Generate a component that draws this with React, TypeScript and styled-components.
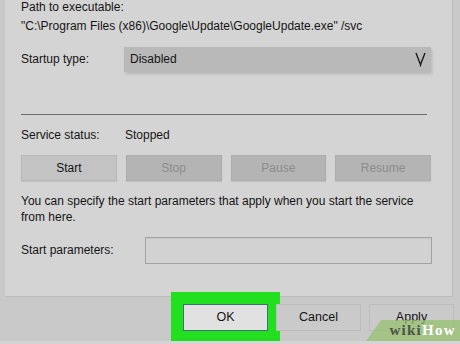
import React from 'react';
import styled, { createGlobalStyle } from 'styled-components';

const GlobalStyle = createGlobalStyle`
  html, body {
    margin: 0;
    padding: 0;
    background: #c9c9c9;
  }
  body {
    font-family: "Liberation Sans", Arial, sans-serif;
    font-size: 12px;
    color: #141414;
  }
`;

const SERVICE_BUTTONS = [
  { label: 'Start', enabled: true },
  { label: 'Stop', enabled: false },
  { label: 'Pause', enabled: false },
  { label: 'Resume', enabled: false },
];

export default function App() {
  const serviceButtonsMarkup = SERVICE_BUTTONS.map((btn) => (
    <ServiceButton key={btn.label} $enabled={btn.enabled}>
      {btn.label}
    </ServiceButton>
  ));

  return (
    <>
      <GlobalStyle />
      <Dialog>
        <TabPage>
          <TextLine>Path to executable:</TextLine>
          <PathValue>"C:\Program Files (x86)\Google\Update\GoogleUpdate.exe" /svc</PathValue>

          <FormRow $labelWidth={103} $height={25} $top={13}>
            <span>Startup type:</span>
            <Select>
              <span>Disabled</span>
              <svg width="11" height="15" viewBox="0 0 11 15">
                <path d="M1 1 L5.5 12.5 L10 1" fill="none" stroke="#1c1c1c" strokeWidth="1.4" />
                <path d="M5.5 12 L5.5 14.5" stroke="#1c1c1c" strokeWidth="1.2" />
              </svg>
            </Select>
          </FormRow>

          <Divider />

          <FormRow $labelWidth={104} $height={15} $top={13}>
            <span>Service status:</span>
            <span>Stopped</span>
          </FormRow>

          <ServiceButtons>{serviceButtonsMarkup}</ServiceButtons>

          <Hint>
            You can specify the start parameters that apply when you start the service
            <br />
            from here.
          </Hint>

          <FormRow $labelWidth={124} $height={27} $top={12}>
            <span>Start parameters:</span>
            <ParamInput />
          </FormRow>
        </TabPage>

        <Footer>
          <DialogButton $highlighted>OK</DialogButton>
          <DialogButton>Cancel</DialogButton>
          <DialogButton>Apply</DialogButton>
        </Footer>

        <Watermark>
          <WikiText>wiki</WikiText>
          <HowText>How</HowText>
        </Watermark>
      </Dialog>
    </>
  );
}

const Dialog = styled.div`
  position: relative;
  width: 460px;
  height: 344px;
  overflow: hidden;
  background: #c9c9c9;
  border-bottom: 3px solid #d4d4d4;
  box-sizing: border-box;
`;

const TabPage = styled.div`
  display: flex;
  flex-direction: column;
  box-sizing: border-box;
  width: 448px;
  height: 296px;
  margin-left: 5px;
  padding: 0 21px 0 16px;
  background: #d4d4d4;
  border-right: 1px solid #bcbcbc;
  box-shadow: 0 1px 1px rgba(0, 0, 0, 0.06);
`;

const TextLine = styled.div`
  line-height: 15px;
  white-space: nowrap;
`;

const PathValue = styled(TextLine)`
  margin-top: 4px;
`;

const FormRow = styled.div<{ $labelWidth: number; $height: number; $top: number }>`
  display: grid;
  grid-template-columns: ${(p) => p.$labelWidth}px 1fr;
  align-items: center;
  height: ${(p) => p.$height}px;
  margin-top: ${(p) => p.$top}px;
  line-height: 15px;
  white-space: nowrap;
`;

const Select = styled.div`
  display: flex;
  align-items: center;
  justify-content: space-between;
  height: 100%;
  padding: 0 5px 0 6px;
  background: #b9b9b9;
  box-shadow: 1px 2px 3px rgba(0, 0, 0, 0.14);
`;

const Divider = styled.div`
  height: 1px;
  margin: 42px 4px 0 0;
  background: #6c6c6c;
`;

const ServiceButtons = styled.div`
  display: grid;
  grid-template-columns: repeat(4, 1fr);
  gap: 9px;
  margin-top: 12px;
  height: 26px;
`;

const ServiceButton = styled.div<{ $enabled: boolean }>`
  display: flex;
  align-items: center;
  justify-content: center;
  background: ${(p) => (p.$enabled ? '#c3c3c3' : '#b4b4b4')};
  color: ${(p) => (p.$enabled ? '#141414' : '#8c8c8c')};
  border: 1px solid ${(p) => (p.$enabled ? '#b9b9b9' : '#adadad')};
  box-shadow: 0 1px 1px rgba(0, 0, 0, 0.08);
`;

const Hint = styled.div`
  margin-top: 12px;
  line-height: 16px;
  white-space: nowrap;
`;

const ParamInput = styled.div`
  height: 100%;
  margin-right: -1px;
  box-sizing: border-box;
  background: #d2d2d2;
  border: 1px solid #a3a3a3;
  box-shadow: inset 0 1px 1px rgba(0, 0, 0, 0.05);
`;

const Footer = styled.div`
  display: flex;
  justify-content: flex-end;
  gap: 8px;
  padding: 8px 6px 0 0;
`;

const DialogButton = styled.div<{ $highlighted?: boolean }>`
  display: flex;
  align-items: center;
  justify-content: center;
  box-sizing: border-box;
  width: 85px;
  height: 27px;
  padding-bottom: 2px;
  background: ${(p) => (p.$highlighted ? '#e1e1e1' : '#cacaca')};
  border: 1px solid ${(p) => (p.$highlighted ? '#3f6f78' : '#bdbdbd')};
  box-shadow: ${(p) => (p.$highlighted ? '0 0 0 12px #22e01f' : 'none')};
  font-size: 12.5px;
`;

const Watermark = styled.div`
  position: absolute;
  right: 0;
  bottom: 0;
  width: 94px;
  height: 21px;
  padding: 1px 4px 0 0;
  box-sizing: border-box;
  display: flex;
  justify-content: flex-end;
  background: rgba(150, 192, 110, 0.72);
  clip-path: polygon(15px 0, 100% 0, 100% 100%, 0 100%);
  font-family: "Liberation Serif", "Times New Roman", serif;
  font-weight: bold;
  font-size: 15px;
  letter-spacing: 1.3px;
  line-height: 18px;
`;

const WikiText = styled.span`
  color: #4d5446;
`;

const HowText = styled.span`
  color: #ffffff;
`;
